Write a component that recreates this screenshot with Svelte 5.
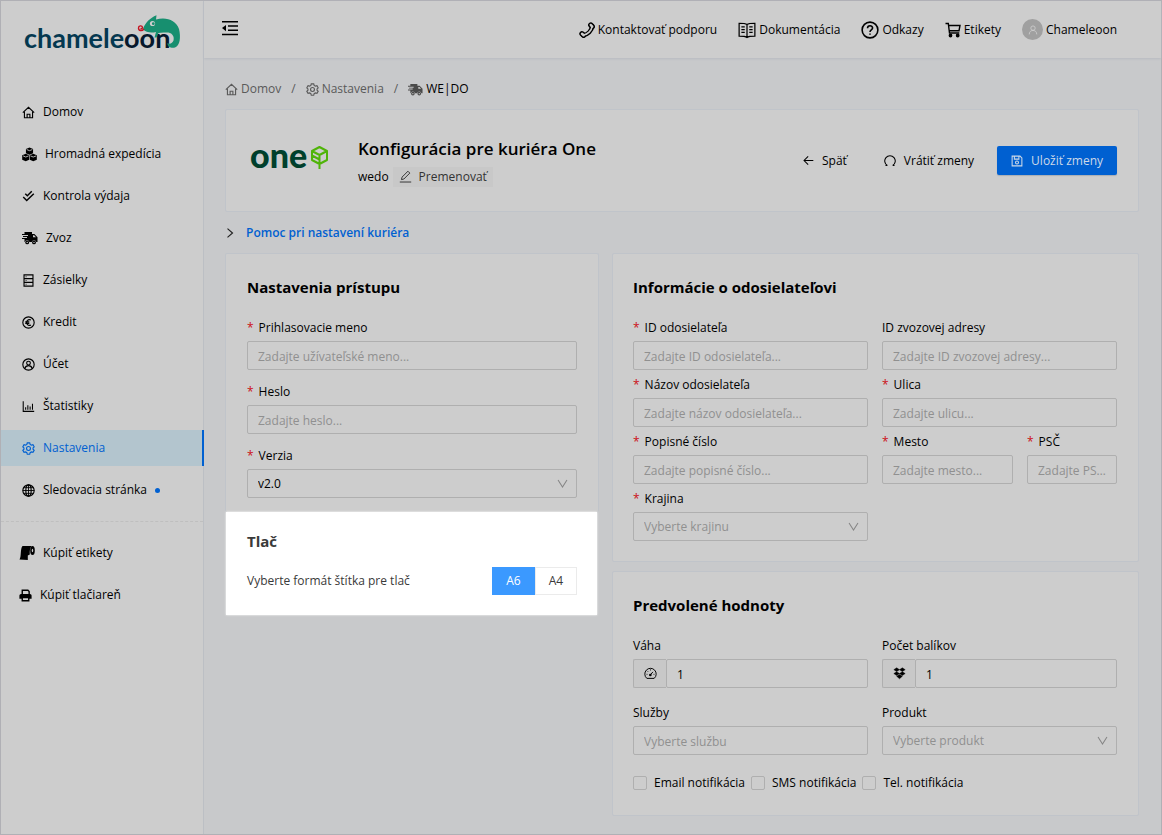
<script>
  const icons = {
    home: '<path d="M1 8.2 8 1.6l7 6.6M3 7v7.5h10V7M6.3 14.5v-4.3h3.4v4.3"/>',
    boxes:
      '<g fill="currentColor" stroke="none"><path d="M8 .5 11.8 2v4.6L8 8.200 4.200 6.600V2z"/><path d="M4 7.300 7.700 8.800v4.700L4 15.200.2 13.500V8.800z"/><path d="M12 7.300l3.800 1.500v4.700L12 15.200l-3.700-1.700V8.800z"/></g><path d="M5 2.700 8 3.900l3-1.200M1.200 9.500 4 10.700l3-1.200M9 9.500l3 1.200 3-1.200" stroke="#cdcdcd" stroke-width=".9"/>',
    check: '<path d="M4 4.500 6.600 7l5.400-5.500M1.500 8.700 5.800 13l8.700-8.500" stroke-width="1.800"/>',
    truck:
      '<g fill="currentColor" stroke="none"><path d="M2.500 2H10v2h2.400L15.500 7.300V12H14.300a2.300 2.300 0 0 0-4.500 0H7.400a2.300 2.300 0 0 0-4.500 0H2.500V9H0V8h5V7H1V6h5V5H0V4h2.500z"/><circle cx="5.200" cy="12.400" r="1.900"/><circle cx="12" cy="12.400" r="1.900"/></g><path d="M11 5.300h1.200L14 7.300h-3z" fill="#cdcdcd" stroke="none"/><circle cx="5.200" cy="12.400" r=".7" fill="#cdcdcd" stroke="none"/><circle cx="12" cy="12.400" r=".7" fill="#cdcdcd" stroke="none"/>',
    database: '<path d="M2.500 1h11v14h-11zM2.500 5.700h11M2.500 10.300h11M4.500 3.400h1M4.500 8h1M4.500 12.600h1"/>',
    euro: '<circle cx="8" cy="8" r="7"/><path d="M11 5a3.500 3.500 0 1 0 0 6M4 7.200h5M4 9h5"/>',
    account:
      '<circle cx="8" cy="8" r="7"/><circle cx="8" cy="6.300" r="2.300"/><path d="M3.400 13c.8-2.500 2.400-3.600 4.600-3.600s3.800 1.100 4.600 3.600"/>',
    chart: '<path d="M1.500 1.500v12.500h13.500M4.500 12V9M7.200 12V6.500M10 12V8M12.900 12V4.500" stroke-width="1.300"/>',
    gear:
      '<circle cx="8" cy="8" r="2.400"/><path d="M6.500 1h3l.5 2 1.500.9 2-.6 1.500 2.600L13.600 7.300v1.500L15 10.200l-1.500 2.600-2-.6-1.500.9-.5 2h-3l-.5-2-1.500-.9-2 .6L1 10.200l1.400-1.400V7.300L1 5.900l1.500-2.600 2 .6L6 3z"/>',
    globe:
      '<circle cx="8" cy="8" r="7"/><ellipse cx="8" cy="8" rx="3.300" ry="7"/><path d="M8 1v14M1 8h14M2 4.500h12M2 11.500h12" stroke-width="1.100"/>',
    roll:
      '<g fill="currentColor" stroke="none"><path d="M3.500 1h9C11 3 10.500 6 10.800 9.500l-2 1V15L.5 14.500C2.500 12 1 4 3.500 1z"/><ellipse cx="13.500" cy="5.500" rx="2.300" ry="4.500"/></g><ellipse cx="13.500" cy="5.500" rx=".7" ry="1.700" fill="#cdcdcd" stroke="none"/>',
    printer:
      '<path d="M4 6V1.500h7L12.500 3v3" stroke-width="1.700"/><path d="M2.500 6h11A2 2 0 0 1 15.500 8v4H.5V8a2 2 0 0 1 2-2z" fill="currentColor" stroke="none"/><path d="M4 10.500h8v4H4z" fill="#cdcdcd" stroke-width="1.700"/>',
    phone:
      '<g stroke-linecap="round"><path d="M13.200 4C13 8.500 8.500 13 4 13.200" stroke-width="4.400"/><path d="M11.800 3l1.400 1.600M3 11.800l1.600 1.400" stroke-width="5.400"/><g stroke="#cdcdcd"><path d="M13 4.500C12.700 8.500 8.500 12.700 4.500 13" stroke-width="1.600"/><path d="M11.800 3l1.400 1.600M3 11.800l1.600 1.400" stroke-width="2.500"/></g></g>',
    book:
      '<path d="M8 3.200C6.500 2 4 2 1 2v11.500c3 0 5.500 0 7 1.200 1.500-1.200 4-1.200 7-1.200V2c-3 0-5.500 0-7 1.200zV14.500M3 5.200h3M3 7.700h3M3 10.200h3M10 5.200h3M10 7.700h3M10 10.200h3" stroke-width="1.100"/>',
    help: '<circle cx="8" cy="8" r="7"/><path d="M5.800 6.500c0-3 4.500-3 4.500-.2 0 1.700-2.300 1.700-2.300 3.500M8 11v1.200"/>',
    cart:
      '<path d="M.5 1.500H3.300L4.500 11h9.800M3.600 3.500H15L14 8.700H4.200" stroke-width="1.400"/><circle cx="5.500" cy="13.500" r="1.200" fill="currentColor"/><circle cx="12.700" cy="13.500" r="1.200" fill="currentColor"/>',
    user: '<circle cx="8" cy="5" r="3.500"/><path d="M2 15c0-4 2.500-6.300 6-6.300s6 2.300 6 6.300"/>',
    fold:
      '<path d="M0 1.700h16M6 6h10M6 10.200h10M0 14.500h16" stroke-width="1.600"/><path d="M4 5v6.200L0 8.100z" fill="currentColor" stroke="none"/>',
    edit: '<path d="M1 14.800h14M3 11.800l.7-3L11 1.500l2.300 2.300L6 11.100z" stroke-width="1.200"/>',
    back: '<path d="M15 8H1.500M7.500 2 1.500 8l6 6" stroke-width="1.500"/>',
    undo: '<path d="M4.500 14A7 7 0 1 1 11.500 14M4.500 14H2M11.500 14H14" stroke-width="1.400"/>',
    save: '<path d="M1.500 1.500h10.500l2.500 2.500v10.500h-13zM4.500 1.500v4h6v-4"/><circle cx="8" cy="10" r="2"/>',
    right: '<path d="M4 1l8 7-8 7" stroke-width="1.900"/>',
    down: '<path d="M1.500 3 8 13l6.500-10" stroke-width="1.500"/>',
    gauge:
      '<path d="M3.500 14a7 7 0 1 1 9 0zM8 9.500l3-3.500M3.200 9h1M8 3v1.200M4.500 5.300l.7.700M11.800 9h1" stroke-width="1.200"/><circle cx="7.800" cy="9.800" r=".9"/>',
    dropbox:
      '<path d="M4.500 1 8 3.300 4.500 5.600 1 3.300zM11.500 1 15 3.300l-3.500 2.300L8 3.300zM4.500 5.800 8 8.100l-3.500 2.300L1 8.100zM11.500 5.800 15 8.100l-3.500 2.300L8 8.100zM4.500 11.400 8 9.200l3.500 2.200L8 14.500z" fill="currentColor" stroke-width=".5"/>',
  };

  const menu = [
    { icon: "home", label: "Domov", size: 13 },
    { icon: "boxes", label: "Hromadná expedícia", size: 15 },
    { icon: "check", label: "Kontrola výdaja", size: 13 },
    { icon: "truck", label: "Zvoz", size: 16 },
    { icon: "database", label: "Zásielky", size: 13 },
    { icon: "euro", label: "Kredit", size: 13 },
    { icon: "account", label: "Účet", size: 13 },
    { icon: "chart", label: "Štatistiky", size: 13 },
    { icon: "gear", label: "Nastavenia", size: 13, active: true },
    { icon: "globe", label: "Sledovacia stránka", size: 13, dot: true },
  ];

  const shop = [
    { icon: "roll", label: "Kúpiť etikety", size: 16 },
    { icon: "printer", label: "Kúpiť tlačiareň", size: 13 },
  ];

  const links = [
    { icon: "phone", label: "Kontaktovať podporu", size: 16 },
    { icon: "book", label: "Dokumentácia", size: 18 },
    { icon: "help", label: "Odkazy", size: 18 },
    { icon: "cart", label: "Etikety", size: 16 },
  ];

  const sender = [
    { id: "sender-id", label: "ID odosielateľa", hint: "Zadajte ID odosielateľa...", required: true },
    { id: "pickup-id", label: "ID zvozovej adresy", hint: "Zadajte ID zvozovej adresy..." },
    { id: "sender-name", label: "Názov odosielateľa", hint: "Zadajte názov odosielateľa...", required: true },
    { id: "street", label: "Ulica", hint: "Zadajte ulicu...", required: true },
    { id: "house", label: "Popisné číslo", hint: "Zadajte popisné číslo...", required: true },
  ];

  const notifications = ["Email notifikácia", "SMS notifikácia", "Tel. notifikácia"];

  let format = $state("A6");
</script>

{#snippet icon(name, size)}
  <svg class="icon" width={size} height={size} viewBox="0 0 16 16" aria-hidden="true">
    {@html icons[name]}
  </svg>
{/snippet}

{#snippet label(id, text, required)}
  <label for={id}>
    {#if required}<span class="star">*</span>{/if}{text}
  </label>
{/snippet}

{#snippet textField(id, text, hint, required)}
  <div class="field">
    {@render label(id, text, required)}
    <input {id} type="text" placeholder={hint} />
  </div>
{/snippet}

{#snippet selectField(id, text, option, required, empty)}
  <div class="field">
    {@render label(id, text, required)}
    <div class="select">
      <select {id} class:empty><option>{option}</option></select>
      {@render icon("down", 11)}
    </div>
  </div>
{/snippet}

{#snippet menuItem(item)}
  <li>
    <a href="#top" class:active={item.active}>
      {@render icon(item.icon, item.size)}
      <span>{item.label}</span>
      {#if item.dot}<i class="dot"></i>{/if}
    </a>
  </li>
{/snippet}

<div class="page">
  <aside>
    <a class="logo" href="#top" aria-label="chameleoon">
      <svg width="160" height="40" viewBox="0 0 160 40">
        <text x="1" y="33" class="logo-text">chamele<tspan class="dark">oon</tspan></text>
        <path
          d="M120 14C122 8 127 3 133.500.3L133 4.500C143 1.500 153 5 156 14c2 8 1 17-4 18.500-4 1-8-1-7.500-4.500 2 1.500 5 .5 6-2.500 1-4-1-7-5-8-3 0-7 0-10 .5l-2 4.500h-2l1.500-5.500c-4 1-10 1-13-3z"
          fill="#178f6f"
        />
        <circle cx="129.500" cy="8.500" r="2.600" fill="#cdcdcd" />
        <circle cx="130.300" cy="8.700" r="1.400" fill="#178f6f" />
        <path
          d="M121 14c-2 2.500-5.500 2-5.500-1 0-2.500 3.500-3 4-.5 0 1-1 1.500-2 1"
          fill="none"
          stroke="#c4121f"
          stroke-width="1.400"
        />
      </svg>
    </a>
    <nav>
      <ul>
        {#each menu as item}{@render menuItem(item)}{/each}
      </ul>
      <ul class="shop">
        {#each shop as item}{@render menuItem(item)}{/each}
      </ul>
    </nav>
  </aside>

  <div class="body">
    <header>
      <button class="fold" aria-label="Menu">{@render icon("fold", 16)}</button>
      <div class="links">
        {#each links as link}
          <a href="#top">{@render icon(link.icon, link.size)}{link.label}</a>
        {/each}
        <a href="#top"><span class="avatar">{@render icon("user", 10)}</span>Chameleoon</a>
      </div>
    </header>

    <main>
      <nav class="crumbs">
        <a href="#top">{@render icon("home", 13)}Domov</a>
        <span>/</span>
        <a href="#top">{@render icon("gear", 13)}Nastavenia</a>
        <span>/</span>
        <a href="#top" class="current">{@render icon("truck", 15)}WE|DO</a>
      </nav>

      <section class="card heading">
        <svg class="one" width="80" height="50" viewBox="0 0 80 50">
          <text x="0" y="32" class="one-text">one</text>
          <g fill="none" stroke="#4fb408" stroke-width="2" stroke-linejoin="round">
            <path d="M69.500 11l7.500 4v9l-7.500 4-7.500-4v-9zM62 15l7.500 4 7.500-4M69.500 19v14M62 19.500l7.500 4" />
          </g>
        </svg>
        <div class="title">
          <h1>Konfigurácia pre kuriéra One</h1>
          <div class="name">
            wedo
            <button class="rename">{@render icon("edit", 13)}Premenovať</button>
          </div>
        </div>
        <div class="actions">
          <button>{@render icon("back", 11)}Späť</button>
          <button>{@render icon("undo", 12)}Vrátiť zmeny</button>
          <button class="primary">{@render icon("save", 12)}Uložiť zmeny</button>
        </div>
      </section>

      <button class="help">{@render icon("right", 10)}<b>Pomoc pri nastavení kuriéra</b></button>

      <div class="columns">
        <div>
          <section class="card access">
            <h2>Nastavenia prístupu</h2>
            {@render textField("login", "Prihlasovacie meno", "Zadajte užívateľské meno...", true)}
            {@render textField("password", "Heslo", "Zadajte heslo...", true)}
            {@render selectField("version", "Verzia", "v2.0", true, false)}
          </section>
          <section class="print">
            <h2>Tlač</h2>
            <div class="format">
              <span id="format-label">Vyberte formát štítka pre tlač</span>
              <div class="toggle" role="radiogroup" aria-labelledby="format-label">
                {#each ["A6", "A4"] as size}
                  <label class:checked={format === size}>
                    <input type="radio" name="format" value={size} bind:group={format} />{size}
                  </label>
                {/each}
              </div>
            </div>
          </section>
        </div>

        <div class="stack">
          <section class="card">
            <h2>Informácie o odosielateľovi</h2>
            <div class="grid">
              {#each sender as f}
                {@render textField(f.id, f.label, f.hint, f.required)}
              {/each}
              <div class="city">
                {@render textField("city", "Mesto", "Zadajte mesto...", true)}
                {@render textField("zip", "PSČ", "Zadajte PSČ...", true)}
              </div>
              {@render selectField("country", "Krajina", "Vyberte krajinu", true, true)}
            </div>
          </section>

          <section class="card">
            <h2>Predvolené hodnoty</h2>
            <div class="grid defaults">
              <div class="field">
                {@render label("weight", "Váha")}
                <div class="addon">
                  <span>{@render icon("gauge", 13)}</span>
                  <input id="weight" type="text" value="1" />
                </div>
              </div>
              <div class="field">
                {@render label("count", "Počet balíkov")}
                <div class="addon">
                  <span>{@render icon("dropbox", 13)}</span>
                  <input id="count" type="text" value="1" />
                </div>
              </div>
              {@render textField("services", "Služby", "Vyberte službu")}
              {@render selectField("product", "Produkt", "Vyberte produkt", false, true)}
            </div>
            <div class="checks">
              {#each notifications as text}
                <label><input type="checkbox" />{text}</label>
              {/each}
            </div>
          </section>
        </div>
      </div>
    </main>
  </div>
</div>

<style>
  :global(body) {
    font-family: "Open Sans", "Noto Sans", sans-serif;
    font-size: 12px;
    line-height: 18px;
    color: #000;
    background: #c8c9cb;
  }

  * {
    box-sizing: border-box;
  }

  a {
    color: inherit;
    text-decoration: none;
  }

  button,
  input,
  select {
    font: inherit;
    color: inherit;
  }

  button {
    display: flex;
    align-items: center;
    gap: 8px;
    padding: 0;
    border: 0;
    background: none;
  }

  .icon {
    flex: none;
    fill: none;
    stroke: currentColor;
    stroke-width: 1.4;
  }

  .page {
    display: flex;
    min-height: 100vh;
    border: 1px solid #b0b0b5;
  }

  aside {
    flex: none;
    width: 203px;
    background: #cdcdcd;
    border-right: 1px solid #bcbfc4;
  }

  .logo {
    display: block;
    height: 93px;
    padding: 14px 0 0 22px;
  }

  .logo-text {
    font: 700 27px Lato, sans-serif;
    fill: #043850;
  }

  .dark {
    fill: #06182c;
  }

  ul {
    margin: 0;
    padding: 0;
    list-style: none;
  }

  li {
    padding-bottom: 6px;
  }

  li a {
    display: flex;
    align-items: center;
    gap: 8px;
    height: 36px;
    padding-left: 21px;
  }

  .active {
    color: #0060d1;
    background: #b3c5ce;
    border-right: 2px solid #0060d1;
    margin-right: -1px;
  }

  .dot {
    width: 5px;
    height: 5px;
    border-radius: 50%;
    background: #0060d1;
  }

  .shop {
    margin-top: 7px;
    padding-top: 13px;
    border-top: 1px dashed #bfbfbf;
  }

  .shop a {
    padding-left: 18px;
  }

  .body {
    flex: 1;
    min-width: 0;
  }

  header {
    display: flex;
    align-items: center;
    justify-content: space-between;
    height: 57px;
    padding: 0 44px 0 18px;
    background: #cdcdcd;
    box-shadow: 0 1px 2px #b8bbc0;
  }

  .fold {
    padding-bottom: 3px;
  }

  .links {
    display: flex;
    gap: 21px;
  }

  .links a {
    display: flex;
    align-items: center;
    gap: 3px;
  }

  .avatar {
    display: grid;
    place-items: center;
    width: 21px;
    height: 21px;
    border-radius: 50%;
    color: #cdcdcd;
    background: #a0a0a0;
  }

  main {
    padding: 22px 22px 18px 21px;
  }

  .crumbs {
    display: flex;
    gap: 10px;
    margin-bottom: 11px;
    color: #5a5a5a;
  }

  .crumbs a {
    display: flex;
    align-items: center;
    gap: 3px;
  }

  .crumbs .current {
    color: #000;
  }

  .current .icon {
    color: #4a4a4a;
  }

  .card {
    padding: 21px 21px 19px 20px;
    border: 1px solid #c0c4ca;
    border-radius: 2px;
    background: #cdcdcd;
  }

  .heading {
    display: flex;
    align-items: center;
    min-height: 103px;
    padding: 0 21px 0 24px;
  }

  .one {
    flex: none;
    margin-right: 28px;
  }

  .one-text {
    font: 900 34px Lato, sans-serif;
    fill: #00402c;
  }

  .title {
    padding-top: 2px;
  }

  h1,
  h2 {
    margin: 0;
    font-size: 15px;
    font-weight: 700;
    line-height: 24px;
  }

  h1 {
    font-size: 17px;
    font-weight: 600;
  }

  h2 {
    margin-bottom: 20px;
  }

  .name {
    display: flex;
    align-items: center;
    gap: 4px;
    margin-top: 6px;
  }

  .rename {
    height: 20px;
    gap: 7px;
    padding: 0 6px;
    color: #333;
    background: #c8c8c8;
  }

  .actions {
    display: flex;
    gap: 9px;
    margin-left: auto;
  }

  .actions button {
    height: 29px;
    padding: 0 14px;
    border-radius: 2px;
    white-space: nowrap;
  }

  .actions .primary {
    color: #cdd9e8;
    background: #0060d1;
    box-shadow: 0 1px 1px #a9aeb5;
  }

  .help {
    height: 41px;
    gap: 11px;
    color: #222;
  }

  .help b {
    font-weight: 600;
    color: #0060d1;
  }

  .columns {
    display: grid;
    grid-template-columns: minmax(0, 374fr) minmax(0, 527fr);
    gap: 13px;
    align-items: start;
  }

  .stack {
    display: grid;
    gap: 9px;
  }

  .access {
    display: grid;
    padding: 21px 21px 13px;
    border-bottom: 0;
    row-gap: 12px;
  }

  .access h2 {
    margin-bottom: 8px;
  }

  .print {
    margin: 0 2px 0 1px;
    padding: 17px 20px 20px 21px;
    color: #3a3a3a;
    background: #fff;
    box-shadow: 0 0 2px #fff;
  }

  .print h2 {
    margin-bottom: 14px;
  }

  .format {
    display: flex;
    align-items: center;
    justify-content: space-between;
  }

  .toggle {
    display: flex;
  }

  .toggle label {
    position: relative;
    width: 42px;
    height: 28px;
    line-height: 26px;
    text-align: center;
    border: 1px solid #ebebeb;
  }

  .toggle .checked {
    width: 43px;
    color: #fff;
    background: #3b99ff;
    border-color: #3b99ff;
  }

  .toggle input {
    position: absolute;
    opacity: 0;
    margin: 0;
  }

  .grid {
    display: grid;
    grid-template-columns: repeat(2, minmax(0, 1fr));
    gap: 5px 14px;
  }

  .defaults {
    row-gap: 15px;
  }

  .city {
    display: grid;
    grid-template-columns: minmax(0, 131fr) minmax(0, 90fr);
    gap: 14px;
  }

  .field > label {
    display: block;
    margin-bottom: 4px;
  }

  .field {
    padding-bottom: 1px;
  }

  .star {
    margin-right: 5px;
    color: #cc1016;
  }

  input[type="text"],
  select {
    display: block;
    width: 100%;
    height: 29px;
    margin: 0;
    padding: 1px 10px 0;
    border: 1px solid #afafaf;
    border-radius: 2px;
    outline: none;
    background: #cdcdcd;
    text-overflow: ellipsis;
    appearance: none;
  }

  input::placeholder {
    color: #909090;
    opacity: 1;
  }

  .select {
    position: relative;
  }

  .select .icon {
    position: absolute;
    top: 9px;
    right: 9px;
    color: #858585;
    pointer-events: none;
  }

  .empty {
    color: #909090;
  }

  .addon {
    display: flex;
  }

  .addon span {
    display: grid;
    flex: none;
    place-items: center;
    width: 33px;
    border: 1px solid #afafaf;
    border-right: 0;
    border-radius: 2px 0 0 2px;
    background: #c8c8c8;
  }

  .checks {
    display: flex;
    flex-wrap: wrap;
    gap: 6px;
    margin: 18px 0 4px;
  }

  .checks label {
    display: flex;
    align-items: center;
    gap: 7px;
  }

  .checks input {
    width: 14px;
    height: 14px;
    margin: 0;
    border: 1px solid #afafaf;
    border-radius: 2px;
    appearance: none;
  }
</style>
